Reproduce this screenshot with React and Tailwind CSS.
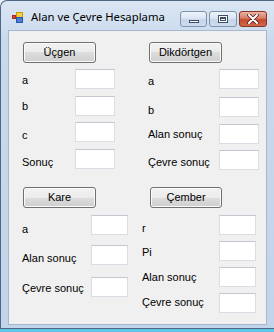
import React from "react";

function TextBox({ w }) {
  return (
    <div
      className={`${w} h-[20px] bg-white border border-[#d9dde4] border-t-[#c2c6ce]`}
    />
  );
}

function Row({ label, rowMt, labelMt, boxW }) {
  return (
    <div className={`flex items-start justify-between h-[20px] ${rowMt}`}>
      <span className={`text-[11px] leading-[13px] text-black whitespace-nowrap ${labelMt}`}>
        {label}
      </span>
      <TextBox w={boxW} />
    </div>
  );
}

function Button({ children, className }) {
  return (
    <div
      className={`h-[21px] rounded-[3px] border border-[#707070] shadow-[inset_0_0_0_1px_#fbfbfb] bg-[linear-gradient(to_bottom,#f2f2f2_0%,#ebebeb_50%,#dddddd_50%,#cfcfcf_100%)] flex items-center justify-center text-[11px] text-black ${className}`}
    >
      {children}
    </div>
  );
}

function FormIcon() {
  return (
    <svg width="11" height="11" viewBox="0 0 11 11">
      <rect x="0.5" y="3.5" width="3" height="3" fill="#e0442c" stroke="#a82a18" strokeWidth="1" />
      <rect x="4.5" y="0.5" width="6" height="5" fill="#f6cf3a" stroke="#c99a12" strokeWidth="1" />
      <rect x="4.5" y="5.5" width="6" height="5" fill="#4a7fd8" stroke="#2b56a8" strokeWidth="1" />
    </svg>
  );
}

function CaptionButtons() {
  const base =
    "h-[16px] rounded-[3px] border flex items-center justify-center";
  return (
    <div className="flex gap-[2px] mt-[10px]">
      <div className={`${base} w-[27px] border-[#7d93ae] bg-[linear-gradient(to_bottom,#eef3fa_0%,#dbe6f3_45%,#c6d5e8_55%,#cfdcee_100%)]`}>
        <div className="w-[10px] h-[3px] mt-[5px] bg-white border border-[#3d4f66]" />
      </div>
      <div className={`${base} w-[28px] border-[#7d93ae] bg-[linear-gradient(to_bottom,#eef3fa_0%,#dbe6f3_45%,#c6d5e8_55%,#cfdcee_100%)]`}>
        <div className="w-[10px] h-[8px] bg-white border border-[#3d4f66] flex items-center justify-center">
          <div className="w-[6px] h-[4px] border border-[#3d4f66] border-t-2" />
        </div>
      </div>
      <div className={`${base} w-[28px] border-[#8a3322] bg-[linear-gradient(to_bottom,#eab3a5_0%,#d77b64_45%,#c24a2e_55%,#d0694c_100%)]`}>
        <svg width="12" height="10" viewBox="0 0 12 10">
          <path d="M2 1 L10 9 M10 1 L2 9" stroke="#5a2016" strokeWidth="3.6" strokeLinecap="round" />
          <path d="M2 1 L10 9 M10 1 L2 9" stroke="#ffffff" strokeWidth="2" strokeLinecap="round" />
        </svg>
      </div>
    </div>
  );
}

export default function App() {
  return (
    <div className="w-[274px] h-[332px] bg-[#eaf2f8] flex flex-col font-['Liberation_Sans',Arial,sans-serif] overflow-hidden">
      {/* Window frame */}
      <div className="w-[274px] h-[329px] border-l border-t border-b border-[#4e6784] rounded-tl-[7px] bg-[linear-gradient(to_bottom,#dbe6f3_0px,#c9d9ed_40px,#c2d4ea_100%)] flex flex-col">
        {/* Title bar */}
        <div className="h-[29px] flex items-start pl-[11px] pr-[7px]">
          <div className="mt-[11px]">
            <FormIcon />
          </div>
          <span className="ml-[8px] mt-[8px] text-[11.3px] leading-[16px] text-black font-['Noto_Sans',sans-serif]">
            Alan ve Çevre Hesaplama
          </span>
          <div className="ml-auto">
            <CaptionButtons />
          </div>
        </div>

        {/* Client area */}
        <div className="ml-[7px] w-[259px] h-[295px] border border-[#a6b8cd] bg-[#f0f0f0] pt-[11px] pl-[13px] flex flex-col">
          {/* Top section */}
          <div className="h-[145px] flex">
            <div className="w-[93px] flex flex-col">
              <Button className="ml-[1px] w-[73px]">Üçgen</Button>
              <Row label="a" rowMt="mt-[6px]" labelMt="mt-[5px]" boxW="w-[40px]" />
              <Row label="b" rowMt="mt-[7px]" labelMt="mt-[4px]" boxW="w-[40px]" />
              <Row label="c" rowMt="mt-[6px]" labelMt="mt-[7px]" boxW="w-[40px]" />
              <Row label="Sonuç" rowMt="mt-[7px]" labelMt="mt-[7px]" boxW="w-[40px]" />
            </div>
            <div className="ml-[33px] w-[111px] flex flex-col">
              <Button className="ml-[1px] w-[73px]">Dikdörtgen</Button>
              <Row label="a" rowMt="mt-[6px]" labelMt="mt-[6px]" boxW="w-[40px]" />
              <Row label="b" rowMt="mt-[8px]" labelMt="mt-[7px]" boxW="w-[40px]" />
              <Row label="Alan sonuç" rowMt="mt-[7px]" labelMt="mt-[4px]" boxW="w-[40px]" />
              <Row label="Çevre sonuç" rowMt="mt-[6px]" labelMt="mt-[6px]" boxW="w-[40px]" />
            </div>
          </div>

          {/* Bottom section */}
          <div className="flex">
            <div className="w-[106px] flex flex-col">
              <Button className="ml-[1px] w-[73px]">Kare</Button>
              <Row label="a" rowMt="mt-[7px]" labelMt="mt-[8px]" boxW="w-[37px]" />
              <Row label="Alan sonuç" rowMt="mt-[10px]" labelMt="mt-[7px]" boxW="w-[37px]" />
              <Row label="Çevre sonuç" rowMt="mt-[12px]" labelMt="mt-[5px]" boxW="w-[37px]" />
            </div>
            <div className="ml-[14px] w-[114px] flex flex-col">
              <Button className="ml-[8px] w-[72px]">Çember</Button>
              <Row label="r" rowMt="mt-[7px]" labelMt="mt-[7px]" boxW="w-[37px]" />
              <Row label="Pi" rowMt="mt-[6px]" labelMt="mt-[5px]" boxW="w-[37px]" />
              <Row label="Alan sonuç" rowMt="mt-[6px]" labelMt="mt-[4px]" boxW="w-[37px]" />
              <Row label="Çevre sonuç" rowMt="mt-[6px]" labelMt="mt-[3px]" boxW="w-[37px]" />
            </div>
          </div>
        </div>
      </div>
      {/* Desktop strip */}
      <div className="h-[3px] bg-[#5fc6e6]" />
    </div>
  );
}
